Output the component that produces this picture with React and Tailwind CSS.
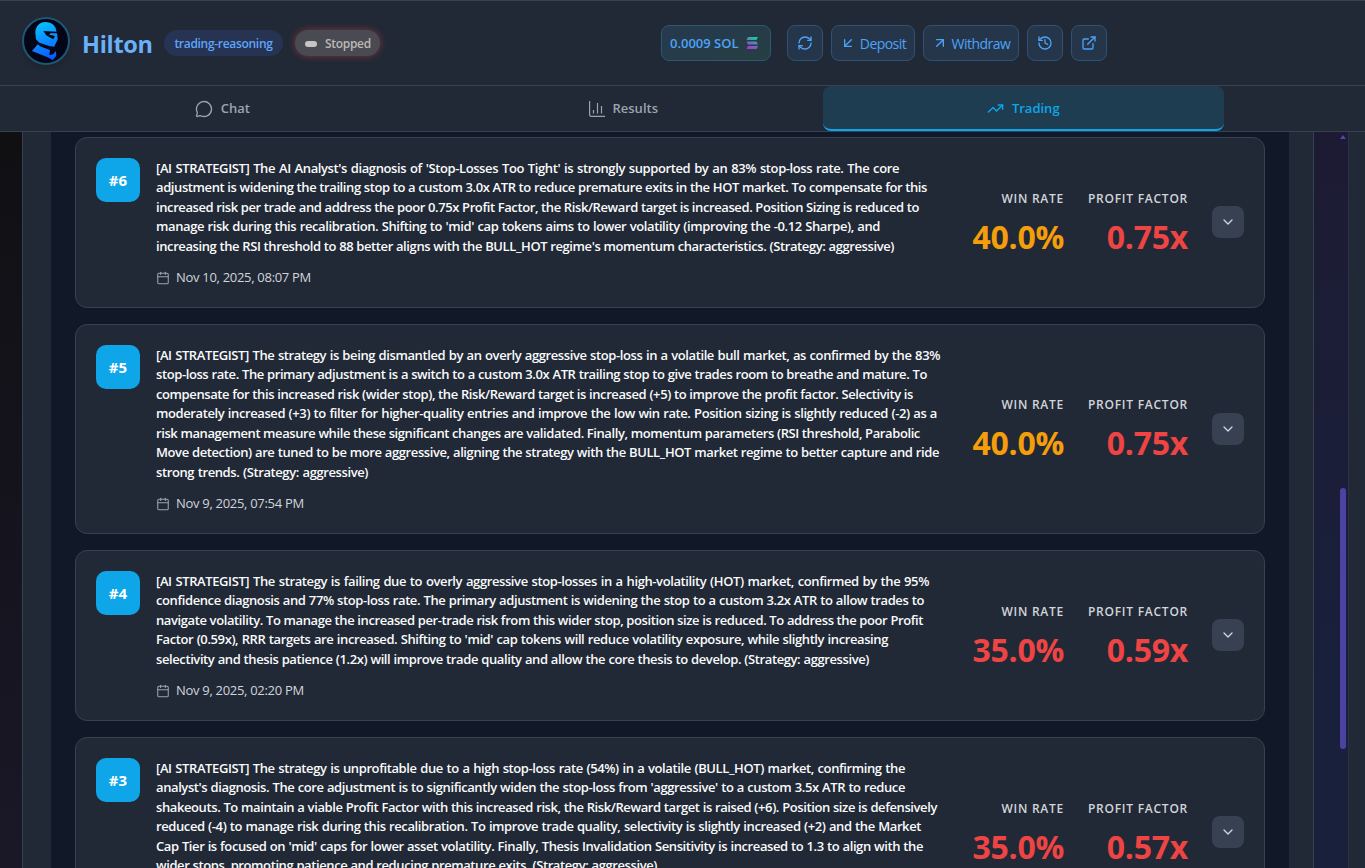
import React from "react";
import {
  ArrowDownLeft,
  ArrowUpRight,
  Calendar,
  ChevronDown,
  ExternalLink,
  History,
  MessageCircle,
  RefreshCw,
  TrendingUp,
} from "lucide-react";

// Each line carries its own measure so the justified copy keeps its breaks
const entries = [
  {
    id: 6,
    date: "Nov 10, 2025, 08:07 PM",
    winRate: "40.0%",
    winColor: "text-[#f59e0b]",
    profitFactor: "0.75x",
    lines: [
      ["w-[743px]", "[AI STRATEGIST] The AI Analyst's diagnosis of 'Stop-Losses Too Tight' is strongly supported by an 83% stop-loss rate. The core"],
      ["w-[771px]", "adjustment is widening the trailing stop to a custom 3.0x ATR to reduce premature exits in the HOT market. To compensate for this"],
      ["w-[763px]", "increased risk per trade and address the poor 0.75x Profit Factor, the Risk/Reward target is increased. Position Sizing is reduced to"],
      ["w-[724px]", "manage risk during this recalibration. Shifting to 'mid' cap tokens aims to lower volatility (improving the -0.12 Sharpe), and"],
      ["w-[738px]", "increasing the RSI threshold to 88 better aligns with the BULL_HOT regime's momentum characteristics. (Strategy: aggressive)"],
    ],
  },
  {
    id: 5,
    date: "Nov 9, 2025, 07:54 PM",
    winRate: "40.0%",
    winColor: "text-[#f59e0b]",
    profitFactor: "0.75x",
    lines: [
      ["w-[784px]", "[AI STRATEGIST] The strategy is being dismantled by an overly aggressive stop-loss in a volatile bull market, as confirmed by the 83%"],
      ["w-[771px]", "stop-loss rate. The primary adjustment is a switch to a custom 3.0x ATR trailing stop to give trades room to breathe and mature. To"],
      ["w-[757px]", "compensate for this increased risk (wider stop), the Risk/Reward target is increased (+5) to improve the profit factor. Selectivity is"],
      ["w-[781px]", "moderately increased (+3) to filter for higher-quality entries and improve the low win rate. Position sizing is slightly reduced (-2) as a"],
      ["w-[759px]", "risk management measure while these significant changes are validated. Finally, momentum parameters (RSI threshold, Parabolic"],
      ["w-[783px]", "Move detection) are tuned to be more aggressive, aligning the strategy with the BULL_HOT market regime to better capture and ride"],
      ["w-[212px]", "strong trends. (Strategy: aggressive)"],
    ],
  },
  {
    id: 4,
    date: "Nov 9, 2025, 02:20 PM",
    winRate: "35.0%",
    winColor: "text-[#ef4444]",
    profitFactor: "0.59x",
    lines: [
      ["w-[773px]", "[AI STRATEGIST] The strategy is failing due to overly aggressive stop-losses in a high-volatility (HOT) market, confirmed by the 95%"],
      ["w-[768px]", "confidence diagnosis and 77% stop-loss rate. The primary adjustment is widening the stop to a custom 3.2x ATR to allow trades to"],
      ["w-[767px]", "navigate volatility. To manage the increased per-trade risk from this wider stop, position size is reduced. To address the poor Profit"],
      ["w-[732px]", "Factor (0.59x), RRR targets are increased. Shifting to 'mid' cap tokens will reduce volatility exposure, while slightly increasing"],
      ["w-[713px]", "selectivity and thesis patience (1.2x) will improve trade quality and allow the core thesis to develop. (Strategy: aggressive)"],
    ],
  },
  {
    id: 3,
    date: "Nov 9, 2025, 11:42 AM",
    winRate: "35.0%",
    winColor: "text-[#ef4444]",
    profitFactor: "0.57x",
    lines: [
      ["w-[749px]", "[AI STRATEGIST] The strategy is unprofitable due to a high stop-loss rate (54%) in a volatile (BULL_HOT) market, confirming the"],
      ["w-[749px]", "analyst's diagnosis. The core adjustment is to significantly widen the stop-loss from 'aggressive' to a custom 3.5x ATR to reduce"],
      ["w-[781px]", "shakeouts. To maintain a viable Profit Factor with this increased risk, the Risk/Reward target is raised (+6). Position size is defensively"],
      ["w-[765px]", "reduced (-4) to manage risk during this recalibration. To improve trade quality, selectivity is slightly increased (+2) and the Market"],
      ["w-[767px]", "Cap Tier is focused on 'mid' caps for lower asset volatility. Finally, Thesis Invalidation Sensitivity is increased to 1.3 to align with the"],
      ["w-[501px]", "wider stops, promoting patience and reducing premature exits. (Strategy: aggressive)"],
    ],
  },
];

function Logo() {
  return (
    <div className="mt-[-5px] size-12 rounded-full border-2 border-[#1f5673] bg-[#020617] shadow-md">
      <svg viewBox="0 0 44 44" className="size-11">
        <defs>
          <linearGradient id="helmet" gradientUnits="userSpaceOnUse" x1="16" y1="4" x2="28" y2="40">
            <stop offset="0" stopColor="#08c0fc" />
            <stop offset="0.5" stopColor="#0a8bff" />
            <stop offset="1" stopColor="#0b57ff" />
          </linearGradient>
        </defs>
        <g fill="url(#helmet)">
          <path d="M21.500 3C27.500 3 32 6.500 32.500 12.800L19.300 12L22.500 16.500L29.300 20.300L31 17L25.500 15.800L26 14.200H33L33.700 20.300L30.300 27.700L26 27.200L15.300 23.700L12 20.300L11.300 13.700C11.500 7.500 15.500 3 21.500 3Z" />
          <path d="M13.700 25.300L16.500 27.500L26 31L25.300 36L28.700 35.500L32 32L32.200 37L28.700 41L23 38L8 32Z" />
        </g>
      </svg>
    </div>
  );
}

function SolanaMark() {
  return (
    <svg viewBox="0 0 12 12" className="h-3 w-3">
      <defs>
        <linearGradient id="sol" gradientUnits="userSpaceOnUse" x1="2" y1="12" x2="8" y2="0">
          <stop offset="0" stopColor="#b72be0" />
          <stop offset="0.5" stopColor="#6b70b8" />
          <stop offset="1" stopColor="#18c9a0" />
        </linearGradient>
      </defs>
      <path fill="url(#sol)" d="M2 0H12L10.500 3H0.500ZM0.500 4.500H10.500L12 7.500H2ZM2 9H12L10.500 12H0.500Z" />
    </svg>
  );
}

function ResultsIcon() {
  return (
    <svg viewBox="0 0 16 16" className="size-4" fill="none" stroke="currentColor" strokeWidth="1.2">
      <path d="M.6 0V13.500Q.6 15.400 2.500 15.400H16M4.500 9V12.500M8.500 2V12.500M12.500 5V12.500" />
    </svg>
  );
}

function HeaderButton({ children, className = "" }) {
  return (
    <button
      className={`flex h-9 shrink-0 items-center justify-center rounded-lg border border-[#2c5278] bg-[#25364b] text-sm text-[#4da3f8] ${className}`}
    >
      {children}
    </button>
  );
}

function Header() {
  return (
    <header className="flex h-[86px] shrink-0 border-t border-b border-[#374151] bg-[#212936]">
      <div className="flex w-[661px] items-center pl-[22px]">
        <Logo />
        <h1 className="ml-3 w-[70px] pt-1 text-[23.5px] font-bold leading-none tracking-[-0.3px] whitespace-nowrap text-[#6ab1fa]">
          Hilton
        </h1>
        <span className="ml-3 flex h-[26px] w-[119px] items-center justify-center rounded-full bg-[#263353] pt-px text-xs font-semibold tracking-[-0.3px] whitespace-nowrap text-[#60a5fa]">
          trading-reasoning
        </span>
        <span className="ml-3 flex h-[26px] w-[85px] items-center rounded-full bg-[#4a4a52] pt-px pl-2.5 text-xs font-semibold tracking-[-0.3px] text-[#bbb9b8] shadow-[0_0_7px_rgba(239,68,68,0.45)]">
          <i className="mr-2 h-[6px] w-3 rounded-full bg-[#c7c5c3]" />
          Stopped
        </span>
      </div>
      <div className="flex items-center gap-2">
        <div className="mr-2 flex h-9 w-[110px] items-center rounded-lg border border-[#2c5872] bg-linear-to-br from-[#26384f] to-[#263f42] pl-2 text-[13px] font-semibold tracking-[0px] whitespace-nowrap text-[#4da3f8]">
          <span className="w-[76px] pt-px">0.0009 SOL</span>
          <SolanaMark />
        </div>
        <HeaderButton className="w-9">
          <RefreshCw size={16} />
        </HeaderButton>
        <HeaderButton className="w-[84px] gap-1 tracking-[-0.55px]">
          <ArrowDownLeft size={16} />
          <span className="pt-0.5">Deposit</span>
        </HeaderButton>
        <HeaderButton className="w-24 gap-1 tracking-[-0.5px]">
          <ArrowUpRight size={16} />
          <span className="pt-0.5">Withdraw</span>
        </HeaderButton>
        <HeaderButton className="w-9">
          <History size={16} />
        </HeaderButton>
        <HeaderButton className="w-9">
          <ExternalLink size={16} />
        </HeaderButton>
      </div>
    </header>
  );
}

function Tabs() {
  const tab = "flex h-[45px] w-[400.5px] items-center justify-center gap-2 text-[13px] font-semibold";
  return (
    <nav className="flex h-[46px] shrink-0 border-b border-[#374151] bg-[#212936] pl-[22px]">
      <div className={`${tab} text-[#9ca3af]`}>
        <MessageCircle size={18} strokeWidth={1.8} />
        Chat
      </div>
      <div className={`${tab} pl-px text-[#9ca3af]`}>
        <ResultsIcon />
        Results
      </div>
      <div className={`${tab} rounded-lg border-b-2 border-[#0ea5e9] bg-[#1e3d51] pt-0.5 text-[#0ea5e9]`}>
        <TrendingUp size={17} />
        Trading
      </div>
    </nav>
  );
}

function Metric({ label, value, color, className }) {
  return (
    <div className={`flex flex-col items-end pt-1 whitespace-nowrap ${className}`}>
      <div className="text-xs leading-[18px] font-semibold tracking-[0.75px] text-[#d1d5db]">{label}</div>
      <div className={`mt-[6px] text-[32px] leading-[45px] font-bold tracking-[-0.25px] ${color}`}>{value}</div>
    </div>
  );
}

function StrategyCard({ entry }) {
  return (
    <article className="flex shrink-0 items-center rounded-xl border border-[#374151] bg-[#212936] p-5">
      <div className="flex size-11 shrink-0 items-center justify-center self-start rounded-[10px] bg-[#0ea5e9] text-[15px] font-bold text-white">
        #{entry.id}
      </div>
      <div className="ml-4 w-[800px] shrink-0">
        <div className="pt-[0.6px] text-[13px] leading-[19.5px] font-semibold tracking-[-0.4px] text-[#f9fafb]">
          {entry.lines.map(([width, text]) => (
            <p key={text} className={`${width} whitespace-nowrap [text-align-last:justify]`}>
              {text}
            </p>
          ))}
        </div>
        <div className="mt-3 flex h-[18.9px] items-center gap-[6px] text-[13px] tracking-[-0.3px] text-[#d1d5db]">
          <Calendar size={14} strokeWidth={1.8} className="text-[#9ca3af]" />
          {entry.date}
        </div>
      </div>
      <Metric label="WIN RATE" value={entry.winRate} color={entry.winColor} className="w-[108px]" />
      <Metric label="PROFIT FACTOR" value={entry.profitFactor} color="text-[#ef4444]" className="w-[124px]" />
      <button className="mb-[0.5px] ml-6 flex size-8 shrink-0 items-center justify-center rounded-lg bg-[#374151] text-[#d1d5db]">
        <ChevronDown size={16} />
      </button>
    </article>
  );
}

export default function App() {
  return (
    <div className="flex h-[868px] w-[1365px] flex-col overflow-hidden bg-[#212936] font-['Open_Sans','Noto_Sans',sans-serif]">
      <Header />
      <Tabs />
      <div className="flex min-h-0 flex-1">
        <div className="w-[22px] bg-linear-to-b from-[#101013] to-[#1a1727]" />
        <div className="w-[29px] border-l border-[#374151]" />
        <main className="flex w-[1238px] flex-col gap-4 overflow-hidden bg-[#111827] px-6 pt-[5px]">
          {entries.map((entry) => (
            <StrategyCard key={entry.id} entry={entry} />
          ))}
        </main>
        <div className="w-[25px] border-r border-[#374151]" />
        {/* Scrollbar gutter */}
        <div className="flex w-[35px] flex-col items-end border-r border-[#2b3148] bg-linear-to-b from-[#1d1b33] to-[#18203c] to-80% pr-[2px]">
          <div className="mt-[3px] size-0 border-x-[3px] border-b-4 border-x-transparent border-b-[#4f46a5]" />
          <div className="mt-[349px] h-[261px] w-[6px] rounded-full bg-[#4b439f]" />
        </div>
      </div>
    </div>
  );
}
